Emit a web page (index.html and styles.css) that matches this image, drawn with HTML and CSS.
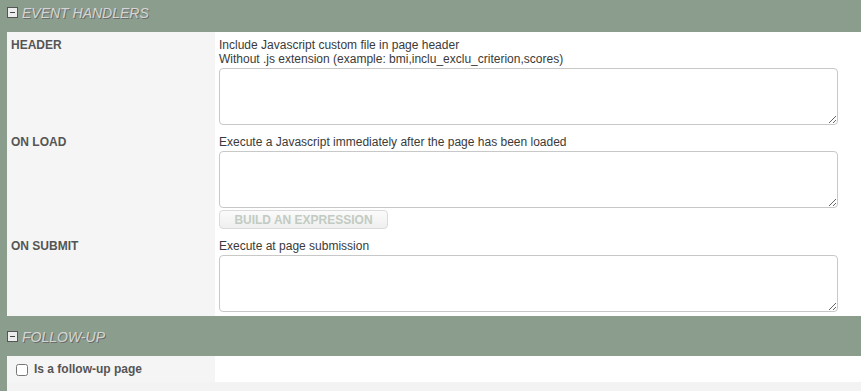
FILE: index.html
```html
<!DOCTYPE html>
<html lang="en">
<head>
  <meta charset="UTF-8">
  <meta name="viewport" content="width=device-width, initial-scale=1.0">
  <title>Page properties</title>
  <link rel="stylesheet" href="styles.css">
</head>
<body>
  <div class="section">
    <div class="section-title"><span class="toggle"></span>Event handlers</div>
    <table class="props">
      <colgroup>
        <col class="col-label">
        <col>
      </colgroup>
      <tr>
        <td class="label">HEADER</td>
        <td class="value">
          <div class="help">Include Javascript custom file in page header<br>Without .js extension (example: bmi,inclu_exclu_criterion,scores)</div>
          <textarea class="code"></textarea>
        </td>
      </tr>
      <tr>
        <td class="label">ON LOAD</td>
        <td class="value">
          <div class="help">Execute a Javascript immediately after the page has been loaded</div>
          <textarea class="code"></textarea>
          <button class="build-btn" disabled>Build an expression</button>
        </td>
      </tr>
      <tr>
        <td class="label">ON SUBMIT</td>
        <td class="value">
          <div class="help">Execute at page submission</div>
          <textarea class="code"></textarea>
        </td>
      </tr>
    </table>
  </div>

  <div class="section">
    <div class="section-title"><span class="toggle"></span>Follow-up</div>
    <table class="props">
      <colgroup>
        <col class="col-label">
        <col>
      </colgroup>
      <tr>
        <td class="label check-cell">
          <label class="check"><input type="checkbox">Is a follow-up page</label>
        </td>
        <td class="value"></td>
      </tr>
      <tr class="filler">
        <td colspan="2"></td>
      </tr>
    </table>
  </div>
</body>
</html>
```

FILE: styles.css
```css
* {
  margin: 0;
  padding: 0;
  box-sizing: border-box;
}

body {
  font-family: 'Liberation Sans', Arial, sans-serif;
  font-size: 12px;
  line-height: 14px;
  background: #8b9d8d;
  color: #3a3a3a;
  padding-left: 7px;
  overflow: hidden;
}

.section + .section {
  margin-top: 8px;
}

.section-title {
  height: 32px;
  padding-top: 5px;
  font-size: 14px;
  line-height: 16px;
  font-style: italic;
  text-transform: uppercase;
  color: #d4d6d4;
  text-shadow: 1px 1px 0 #6b6b6b;
}

.toggle {
  display: inline-block;
  position: relative;
  width: 11px;
  height: 11px;
  margin-right: 4px;
  border: 1px solid #555;
  background: #ececec;
}

.toggle::after {
  content: '';
  position: absolute;
  left: 2px;
  right: 2px;
  top: 4px;
  height: 1px;
  background: #444;
}

.props {
  width: 100%;
  border-spacing: 0;
  table-layout: fixed;
}

.col-label {
  width: 208px;
}

.props td {
  vertical-align: top;
  padding: 6px 4px 4px 4px;
}

.label {
  background: #f5f5f5;
  font-weight: bold;
  color: #555;
}

.value {
  background: #fff;
}

.code {
  display: block;
  width: 619px;
  height: 57px;
  margin-top: 2px;
  border: 1px solid #c8c8c8;
  border-radius: 4px;
  font-family: 'Liberation Mono', monospace;
  font-size: 12px;
  padding: 3px;
  background: #fff;
}

.build-btn {
  display: block;
  width: 169px;
  height: 19px;
  margin-top: 2px;
  border: 1px solid #dadada;
  border-radius: 4px;
  background: linear-gradient(#fbfbfb, #efefef);
  font-family: 'Liberation Sans', Arial, sans-serif;
  font-size: 12px;
  font-weight: bold;
  text-transform: uppercase;
  color: #c2cbc2;
}

.props td.check-cell {
  padding: 6px 4px;
}

.check {
  display: block;
}

.check input {
  width: 12px;
  height: 12px;
  margin: 0 6px 0 5px;
  vertical-align: -3px;
}

.filler td {
  height: 20px;
  padding: 0;
  background: #f3f3f3;
}
```
